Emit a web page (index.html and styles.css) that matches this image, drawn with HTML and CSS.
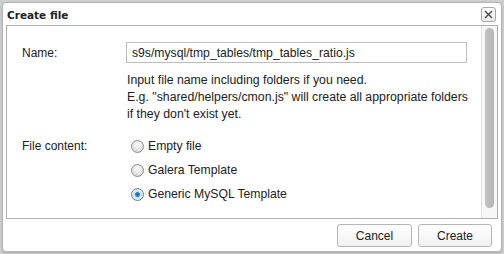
FILE: index.html
```html
<!DOCTYPE html>
<html>
<head>
<meta charset="utf-8">
<link rel="stylesheet" href="styles.css">
</head>
<body>
<div class="dialog">
  <div class="titlebar">
    <span class="title">Create file</span>
    <button class="close" aria-label="Close">
      <svg width="9" height="9" viewBox="0 0 9 9"><path d="M1 1L8 8M8 1L1 8" stroke="#444" stroke-width="1.3"/></svg>
    </button>
  </div>
  <div class="panel">
    <div class="form">
      <div class="label name-label">Name:</div>
      <div class="field">
        <div class="input">s9s/mysql/tmp_tables/tmp_tables_ratio.js</div>
        <div class="help">Input file name including folders if you need.<br>E.g. "shared/helpers/cmon.js" will create all appropriate folders<br>if they don't exist yet.</div>
      </div>
      <div class="label content-label">File content:</div>
      <div class="radios">
        <label class="radio"><span class="dot"></span>Empty file</label>
        <label class="radio"><span class="dot"></span>Galera Template</label>
        <label class="radio"><span class="dot checked"></span>Generic MySQL Template</label>
      </div>
    </div>
    <div class="scrollbar"><div class="thumb"></div></div>
  </div>
  <div class="footer">
    <button class="btn">Cancel</button>
    <button class="btn">Create</button>
  </div>
</div>
</body>
</html>
```
FILE: styles.css
```css
html, body {
  margin: 0;
  padding: 0;
}
body {
  width: 504px;
  height: 254px;
  background: #cdcdcd;
  font-family: "DejaVu Sans", Verdana, sans-serif;
  color: #222;
  overflow: hidden;
}
.dialog {
  box-sizing: border-box;
  margin: 2px 0 0 2px;
  width: 500px;
  height: 250px;
  background: #fff;
  border: 1px solid #b4b4b4;
  border-radius: 4px;
  box-shadow: 0 1px 2px rgba(0,0,0,0.15);
  display: flex;
  flex-direction: column;
}
.titlebar {
  height: 22px;
  display: flex;
  align-items: center;
  justify-content: space-between;
  padding: 0 4px 0 4px;
}
.title {
  font-family: "DejaVu Sans", Verdana, sans-serif;
  font-weight: bold;
  font-size: 10.5px;
  color: #222;
  margin-top: 2px;
}
.close {
  box-sizing: border-box;
  width: 15px;
  height: 15px;
  padding: 0;
  border: 1px solid #a8a8a8;
  border-radius: 3px;
  background: linear-gradient(#fff, #ececec);
  display: flex;
  align-items: center;
  justify-content: center;
  margin-top: 1px;
  margin-right: 1px;
}
.panel {
  box-sizing: border-box;
  margin: 0 3px 0 3px;
  height: 194px;
  border: 1px solid #b0b0b0;
  display: flex;
  position: relative;
}
.form {
  flex: 1;
  display: grid;
  grid-template-columns: 104px 1fr;
  padding: 16px 0 0 15px;
  align-content: start;
  font-family: "Liberation Sans", Arial, sans-serif;
  font-size: 12px;
}
.label {
  color: #222;
}
.name-label {
  line-height: 23px;
}
.input {
  box-sizing: border-box;
  width: 341px;
  height: 21px;
  border: 1px solid #bdbdbd;
  padding: 1px 5px 0;
  line-height: 19px;
  font-size: 12.2px;
  color: #222;
}
.help {
  margin-top: 9px;
  line-height: 17px;
  padding-left: 1px;
  font-size: 12.3px;
}
.content-label {
  margin-top: 11px;
  line-height: 24px;
}
.radios {
  margin-top: 11px;
  display: flex;
  flex-direction: column;
}
.radio {
  height: 24px;
  display: flex;
  align-items: center;
  padding-left: 5px;
  font-size: 12.2px;
}
.dot {
  box-sizing: border-box;
  width: 13px;
  height: 13px;
  border-radius: 50%;
  border: 1px solid #8c8c8c;
  background: radial-gradient(circle at 50% 35%, #fdfdfd 0%, #e2e2e2 60%, #c8c8c8 100%);
  margin-right: 4px;
  position: relative;
}
.dot.checked {
  border-color: #5f7f99;
  background: radial-gradient(circle at 50% 50%, #1a5f8e 0%, #3d8fc2 28%, #c2dcee 34%, #e8f1f8 70%, #b5c9d9 100%);
}
.scrollbar {
  width: 15px;
  border-left: 1px solid #e4e4e4;
  background: #f7f7f7;
  display: flex;
  justify-content: center;
  padding-top: 2px;
}
.thumb {
  width: 9px;
  height: 180px;
  border-radius: 5px;
  background: linear-gradient(90deg, #c4c4c4, #b4b4b4);
}
.footer {
  flex: 1;
  display: flex;
  justify-content: flex-end;
  align-items: flex-start;
  gap: 6px;
  padding: 5px 9px 0 0;
}
.btn {
  box-sizing: border-box;
  height: 23px;
  border: 1px solid #b5b5b5;
  border-radius: 3px;
  background: linear-gradient(#ffffff, #f1f1f1);
  font-family: "Liberation Sans", Arial, sans-serif;
  font-size: 12px;
  color: #222;
  padding: 0;
}
.btn:first-child {
  width: 75px;
}
.btn:last-child {
  width: 74px;
}
```
